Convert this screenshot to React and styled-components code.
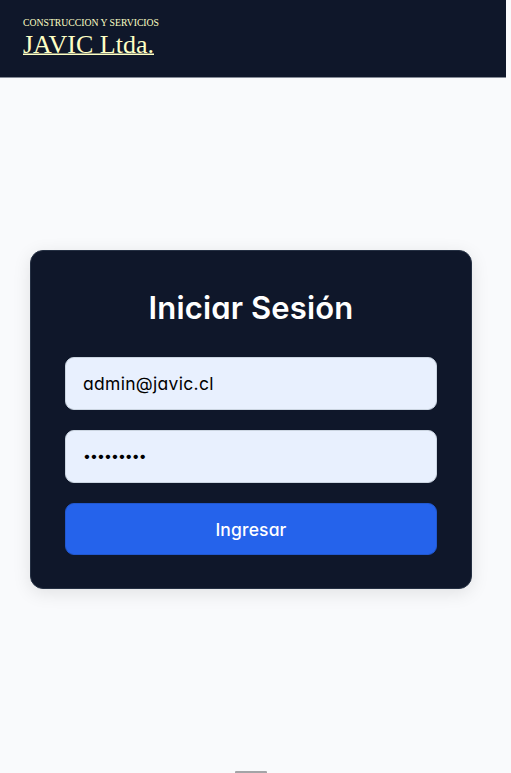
import React from "react";
import styled, { createGlobalStyle } from "styled-components";

const GlobalStyle = createGlobalStyle`
  * { box-sizing: border-box; }
  html, body { margin: 0; background: #f9fafc; overflow: hidden; }
`;

const Page = styled.div`
  width: 506px;
  height: 773px;
  display: flex;
  flex-direction: column;
  font-family: Inter, sans-serif;
  font-feature-settings: "cv11" 1;
`;

const Header = styled.header`
  flex: none;
  height: 78px;
  padding: 17px 23px 0;
  background: #0f172a;
  border-bottom: 1px solid #858b97;
`;

const Logo = styled.div`
  display: flex;
  flex-direction: column;
  align-items: flex-start;
  color: #feffc4;
  font-family: "Liberation Serif", serif;
  white-space: nowrap;
`;

const Wordmark = styled.svg`
  display: block;
  overflow: visible;
  fill: currentColor;
  font-family: inherit;
`;

const Main = styled.main`
  flex: 1;
  padding: 172px 34px 0 30px;
`;

const Card = styled.form`
  width: 442px;
  height: 339px;
  padding: 34px 34px 0;
  display: flex;
  flex-direction: column;
  background: #0f172a;
  border: 1px solid #253043;
  border-radius: 13px;
  box-shadow: 0 4px 18px rgba(0, 0, 0, 0.1);
`;

const Title = styled.h1`
  margin: 0 0 27px;
  height: 45px;
  line-height: 45px;
  text-align: center;
  color: #fff;
  font-size: 31px;
  font-weight: 640;
  letter-spacing: 0.15px;
`;

const Field = styled.input`
  flex: none;
  width: 372px;
  height: 53px;
  margin: 0 0 20px;
  padding: 0 17px ${(p) => p.$lift || "0"};
  border: 1px solid #cbd5e1;
  border-radius: 9px;
  outline: none;
  background: #e8f0fe;
  color: #000;
  font-family: inherit;
  font-feature-settings: inherit;
  font-size: ${(p) => p.$size};
  letter-spacing: ${(p) => p.$tracking};
`;

const Submit = styled.button`
  flex: none;
  width: 372px;
  height: 52px;
  padding: 0;
  border: 1px solid #2158cf;
  border-radius: 9px;
  background: #2563eb;
  color: #fff;
  font-family: inherit;
  font-feature-settings: inherit;
  font-size: 17.5px;
  font-weight: 450;
  letter-spacing: 0.15px;
`;

const Handle = styled.div`
  flex: none;
  width: 32px;
  height: 2px;
  margin-left: 235px;
  background: #a3a4a7;
  border-radius: 1px 1px 0 0;
`;

export default function App() {
  return (
    <>
      <GlobalStyle />
      <Page>
        <Header>
          <Logo>
            <Wordmark width="137" height="38">
              <text x="0" y="9" fontSize="10" textLength="136" lengthAdjust="spacingAndGlyphs">
                CONSTRUCCION Y SERVICIOS
              </text>
              <text x="0" y="36" fontSize="26" textLength="131" lengthAdjust="spacingAndGlyphs">
                JAVIC Ltda.
              </text>
              <rect x="0" y="36.5" width="131" height="1.5" />
            </Wordmark>
          </Logo>
        </Header>
        <Main>
          <Card onSubmit={(e) => e.preventDefault()}>
            <Title>Iniciar Sesión</Title>
            <Field type="email" defaultValue="admin@javic.cl" $size="17.5px" $tracking="0.3px" />
            <Field type="password" defaultValue="javic1234" $size="14px" $tracking="-0.9px" $lift="2px" />
            <Submit type="submit">Ingresar</Submit>
          </Card>
        </Main>
        <Handle />
      </Page>
    </>
  );
}
